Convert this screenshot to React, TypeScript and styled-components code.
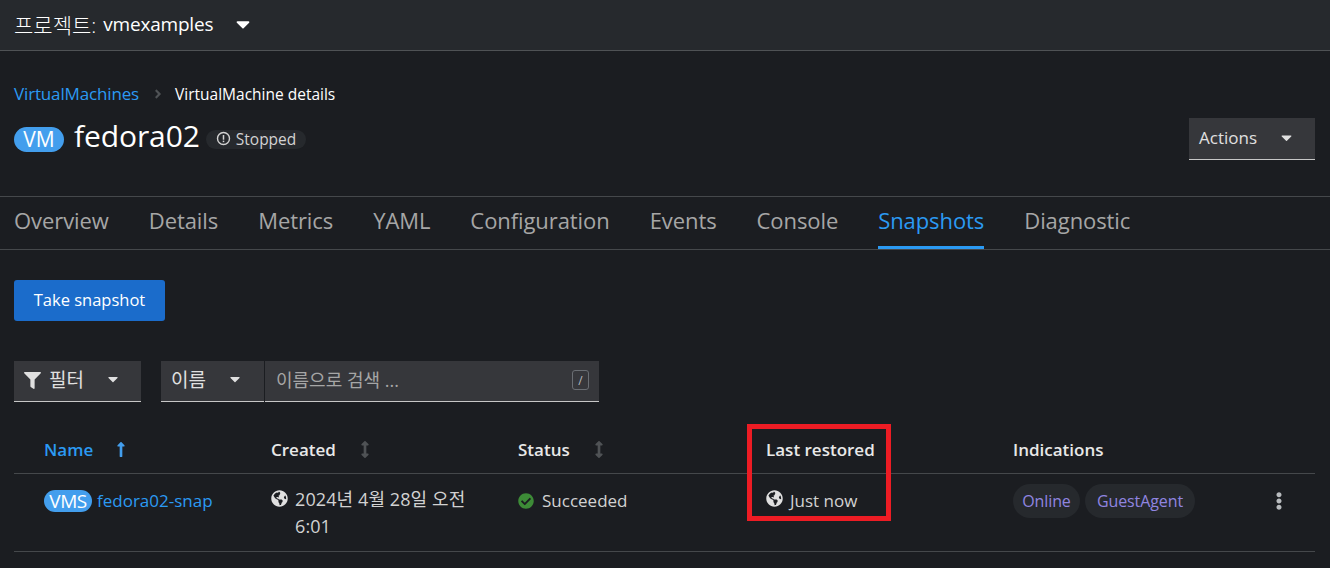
import React from "react";
import styled, { createGlobalStyle } from "styled-components";
import {
  FaGlobeAmericas,
  FaFilter,
  FaCheckCircle,
  FaEllipsisV,
  FaLongArrowAltUp,
  FaArrowsAltV,
  FaAngleRight,
  FaCaretDown,
} from "react-icons/fa";

const Global = createGlobalStyle`
  html, body { margin: 0; padding: 0; background: #1b1d21; }
  body { font-family: "Open Sans", "Noto Sans CJK KR", sans-serif; color: #e0e0e0; }
  * { box-sizing: border-box; }
`;

const Page = styled.div`
  position: relative;
  width: 1330px;
  height: 568px;
  overflow: hidden;
  background: #1b1d21;
`;

const ProjectBar = styled.div`
  height: 51px;
  background: #26292d;
  border-bottom: 1px solid #4f5255;
  display: flex;
  align-items: center;
  padding: 0 14px 2px;
  font-size: 19px;
  letter-spacing: -0.2px;
  color: #fff;
`;

const ProjectLabel = styled.span`
  font-size: 21px;
  font-weight: 300;
  margin-right: 7px;
  letter-spacing: 0;
`;

const Caret = styled(FaCaretDown)<{ $size?: number; $ml?: number; $color?: string }>`
  width: ${(p) => p.$size ?? 14}px;
  height: ${(p) => p.$size ?? 14}px;
  margin-left: ${(p) => p.$ml ?? 0}px;
  color: ${(p) => p.$color ?? "#e0e0e0"};
  flex: none;
`;

const Header = styled.div`
  height: 145px;
  padding: 32px 15px 0 14px;
  display: flex;
  justify-content: space-between;
`;

const HeaderLeft = styled.div`
  display: flex;
  flex-direction: column;
`;

const Breadcrumbs = styled.div`
  display: flex;
  align-items: center;
  height: 21px;
`;

const CrumbLink = styled.span`
  color: #2b9af3;
  font-size: 17px;
  letter-spacing: -0.15px;
`;

const CrumbSep = styled(FaAngleRight)`
  width: 12px;
  height: 14px;
  color: #4f5255;
  margin: 0 11px 0 13px;
`;

const CrumbCurrent = styled.span`
  color: #fff;
  font-size: 15.5px;
`;

const TitleRow = styled.div`
  display: flex;
  align-items: center;
  margin-top: 17px;
  height: 36px;
`;

const KindBadge = styled.span<{ $large?: boolean }>`
  display: inline-flex;
  align-items: center;
  justify-content: center;
  flex: none;
  background: #439eed;
  color: #fff;
  border-radius: 14px;
  width: ${(p) => (p.$large ? 50 : 48)}px;
  height: ${(p) => (p.$large ? 25 : 22)}px;
  margin-top: ${(p) => (p.$large ? 0 : 3)}px;
  font-size: ${(p) => (p.$large ? 21 : 19)}px;
  letter-spacing: ${(p) => (p.$large ? 0 : -0.5)}px;
`;

const Title = styled.h1`
  margin: 0 0 7px 10px;
  font-size: 30px;
  font-weight: 500;
  color: #fff;
  letter-spacing: -0.1px;
`;

const StatusChip = styled.span`
  display: inline-flex;
  align-items: center;
  gap: 5px;
  height: 19px;
  margin: 1px 0 0 6px;
  padding: 0 10px 2px;
  border-radius: 10px;
  background: #26292d;
  color: #d2d2d2;
  font-size: 15.5px;
`;

const InfoIcon = styled.svg`
  width: 15px;
  height: 15px;
  flex: none;
`;

const ActionsButton = styled.div`
  width: 126px;
  height: 42px;
  margin-top: 35px;
  padding: 0 20px 2px 10px;
  background: #36373b;
  border-bottom: 1px solid #c7c7c7;
  display: flex;
  align-items: center;
  justify-content: space-between;
  font-size: 17px;
  color: #e0e0e0;
`;

const Tabs = styled.nav`
  height: 54px;
  padding: 0 14px;
  display: flex;
  gap: 40px;
  border-top: 1px solid #45484b;
  border-bottom: 1px solid #45484b;
`;

const Tab = styled.div<{ $active?: boolean }>`
  display: flex;
  align-items: center;
  height: 52px;
  padding-bottom: 4px;
  font-size: 22px;
  letter-spacing: -0.08px;
  color: ${(p) => (p.$active ? "#2b9af3" : "#a6a6a6")};
  border-bottom: 3px solid ${(p) => (p.$active ? "#2b9af3" : "transparent")};
`;

const Content = styled.div`
  padding: 30px 15px 0 14px;
`;

const PrimaryButton = styled.div`
  width: 151px;
  height: 41px;
  border-radius: 3px;
  background: #1b6ccb;
  color: #fff;
  display: flex;
  align-items: center;
  justify-content: center;
  padding-bottom: 2px;
  font-size: 16.5px;
`;

const Toolbar = styled.div`
  display: flex;
  align-items: stretch;
  margin-top: 40px;
  height: 41px;
`;

const Select = styled.div<{ $w: number; $gap?: number }>`
  width: ${(p) => p.$w}px;
  margin-right: ${(p) => p.$gap ?? 0}px;
  background: #36373b;
  border-bottom: 1px solid #c7c7c7;
  display: flex;
  align-items: center;
  padding: 0 0 5px 10px;
  font-size: 19px;
  color: #e0e0e0;
  flex: none;
`;

const FilterIcon = styled(FaFilter)`
  width: 17px;
  height: 17px;
  margin: 3px 8px 0 0;
  color: #e0e0e0;
`;

const SearchField = styled.div`
  width: 334px;
  margin-left: 1px;
  background: #36373b;
  border-bottom: 1px solid #c7c7c7;
  display: flex;
  align-items: center;
  justify-content: space-between;
  padding: 0 10px 5px 11px;
  font-size: 18px;
  color: #a6a6a6;
`;

const Kbd = styled.span`
  width: 17px;
  height: 20px;
  margin-top: 3px;
  border: 1px solid #6a6e73;
  border-radius: 3px;
  display: flex;
  align-items: center;
  justify-content: center;
  font-size: 12px;
  color: #b8bbbe;
`;

const Table = styled.div`
  margin-top: 22px;
`;

const columns = "227px 247px 248px 247px 1fr";

const HeadRow = styled.div`
  display: grid;
  grid-template-columns: ${columns};
  height: 50px;
  border-bottom: 1px solid #45484b;
  align-items: center;
  padding: 2px 0 0 30px;
`;

const HeadCell = styled.div<{ $active?: boolean }>`
  display: flex;
  align-items: center;
  font-size: 17px;
  font-weight: 600;
  color: ${(p) => (p.$active ? "#2b9af3" : "#e8e8e8")};
`;

const SortIcon = styled(FaArrowsAltV)`
  width: 10px;
  height: 17px;
  margin-left: 24px;
  color: #4f5255;
`;

const SortedIcon = styled(FaLongArrowAltUp)`
  width: 10px;
  height: 17px;
  margin-left: 23px;
  color: #439eed;
`;

const BodyRow = styled.div`
  display: grid;
  grid-template-columns: ${columns};
  height: 78px;
  border-bottom: 1px solid #45484b;
  padding: 13px 0 0 30px;
  position: relative;
`;

const Cell = styled.div`
  display: flex;
  align-items: flex-start;
  font-size: 17px;
  line-height: 27px;
  color: #d2d2d2;
`;

const NameLink = styled.span`
  color: #2b9af3;
  margin-left: 5px;
`;

const CellIcon = styled.span`
  display: inline-flex;
  width: 24px;
  flex: none;
  padding-top: 4px;
  color: #e0e0e0;
`;

const Globe = styled(FaGlobeAmericas)`
  width: 17px;
  height: 17px;
  margin-top: -1px;
`;

const Check = styled(FaCheckCircle)`
  width: 16px;
  height: 16px;
  margin-top: 2px;
  color: #3d8b37;
`;

const CreatedText = styled.span`
  width: 180px;
  font-size: 18px;
  line-height: 27px;
  margin-top: -1px;
  letter-spacing: 0.1px;
`;

const Label = styled.span<{ $w: number }>`
  display: inline-flex;
  align-items: center;
  justify-content: center;
  width: ${(p) => p.$w}px;
  height: 34px;
  border-radius: 17px;
  background: #26292d;
  color: #9085e0;
  font-size: 16px;
  letter-spacing: -0.1px;
  margin-right: 5px;
`;

const LabelGroup = styled.div`
  display: flex;
  margin-top: -3px;
`;

const Kebab = styled(FaEllipsisV)`
  position: absolute;
  right: 28px;
  top: 18px;
  width: 16px;
  height: 18px;
  color: #b8bbbe;
`;

const Highlight = styled.div`
  position: absolute;
  left: 747px;
  top: 424px;
  width: 144px;
  height: 97px;
  border: 5px solid #ed1c24;
  pointer-events: none;
`;

export default function App() {
  const tabs = ["Overview", "Details", "Metrics", "YAML", "Configuration", "Events", "Console", "Snapshots", "Diagnostic"];
  return (
    <Page>
      <Global />
      <ProjectBar>
        <ProjectLabel>프로젝트:</ProjectLabel>
        <span>vmexamples</span>
        <Caret $size={22} $ml={19} $color="#fff" />
      </ProjectBar>
      <Header>
        <HeaderLeft>
          <Breadcrumbs>
            <CrumbLink>VirtualMachines</CrumbLink>
            <CrumbSep />
            <CrumbCurrent>VirtualMachine details</CrumbCurrent>
          </Breadcrumbs>
          <TitleRow>
            <KindBadge $large>VM</KindBadge>
            <Title>fedora02</Title>
            <StatusChip>
              <InfoIcon viewBox="0 0 16 16">
                <circle cx="8" cy="8" r="6.4" fill="none" stroke="#d2d2d2" strokeWidth="1.5" />
                <rect x="7.2" y="4.3" width="1.6" height="5" fill="#d2d2d2" />
                <rect x="7.2" y="10.3" width="1.6" height="1.6" fill="#d2d2d2" />
              </InfoIcon>
              Stopped
            </StatusChip>
          </TitleRow>
        </HeaderLeft>
        <ActionsButton>
          Actions
          <Caret $size={17} />
        </ActionsButton>
      </Header>
      <Tabs>
        {tabs.map((t) => (
          <Tab key={t} $active={t === "Snapshots"}>
            {t}
          </Tab>
        ))}
      </Tabs>
      <Content>
        <PrimaryButton>Take snapshot</PrimaryButton>
        <Toolbar>
          <Select $w={127} $gap={20}>
            <FilterIcon />
            필터
            <Caret $size={16} $ml={21} />
          </Select>
          <Select $w={103}>
            이름
            <Caret $size={16} $ml={21} />
          </Select>
          <SearchField>
            이름으로 검색 ...
            <Kbd>/</Kbd>
          </SearchField>
        </Toolbar>
        <Table>
          <HeadRow>
            <HeadCell $active>
              Name
              <SortedIcon />
            </HeadCell>
            <HeadCell>
              Created
              <SortIcon />
            </HeadCell>
            <HeadCell>
              Status
              <SortIcon />
            </HeadCell>
            <HeadCell>Last restored</HeadCell>
            <HeadCell>Indications</HeadCell>
          </HeadRow>
          <BodyRow>
            <Cell>
              <KindBadge>VMS</KindBadge>
              <NameLink>fedora02-snap</NameLink>
            </Cell>
            <Cell>
              <CellIcon>
                <Globe />
              </CellIcon>
              <CreatedText>2024년 4월 28일 오전 6:01</CreatedText>
            </Cell>
            <Cell>
              <CellIcon>
                <Check />
              </CellIcon>
              Succeeded
            </Cell>
            <Cell>
              <CellIcon>
                <Globe />
              </CellIcon>
              Just now
            </Cell>
            <Cell>
              <LabelGroup>
                <Label $w={67}>Online</Label>
                <Label $w={110}>GuestAgent</Label>
              </LabelGroup>
            </Cell>
            <Kebab />
          </BodyRow>
        </Table>
      </Content>
      <Highlight />
    </Page>
  );
}
